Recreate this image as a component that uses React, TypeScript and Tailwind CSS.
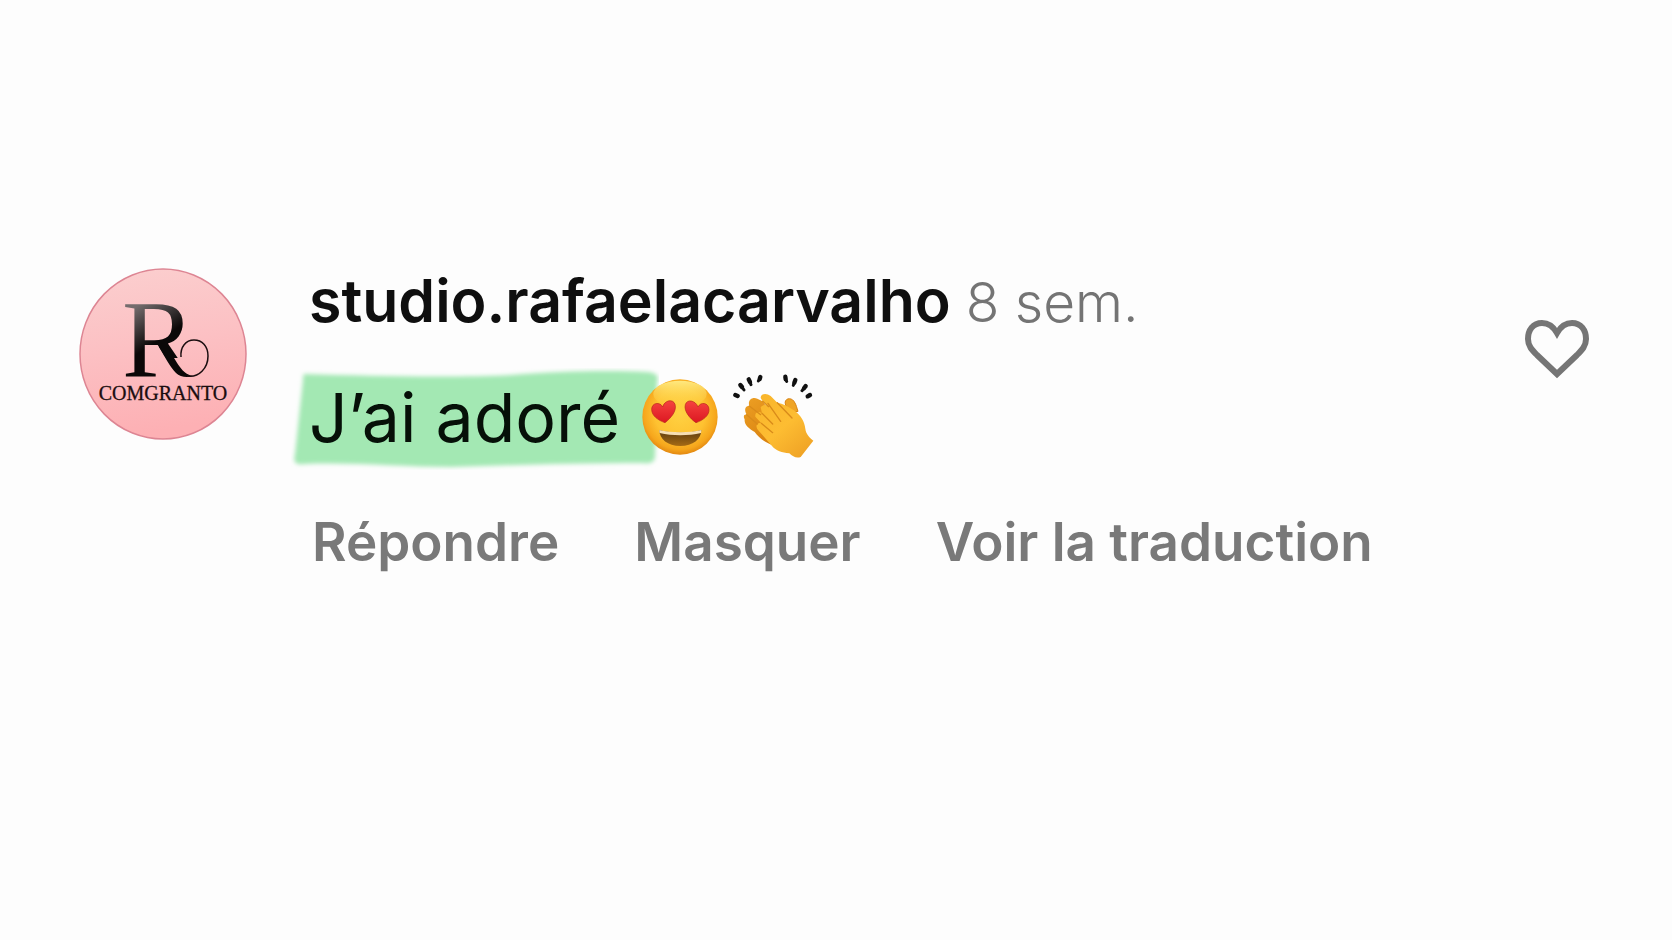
import React from 'react';

type Action = {
  id: string;
  label: string;
};

const actions: Action[] = [
  { id: 'reply', label: 'Répondre' },
  { id: 'hide', label: 'Masquer' },
  { id: 'translate', label: 'Voir la traduction' },
];

function Avatar() {
  return (
    <svg viewBox="0 0 168 172" className="w-[168px] h-[172px] shrink-0" role="img" aria-label="COMGRANTO">
      <defs>
        <linearGradient id="avatar-bg" x1="0" y1="0" x2="0.15" y2="1">
          <stop offset="0" stopColor="#fbcfcf" />
          <stop offset="0.5" stopColor="#fcc0c3" />
          <stop offset="1" stopColor="#fdb0b4" />
        </linearGradient>
        <linearGradient id="avatar-ink" gradientUnits="userSpaceOnUse" x1="58" y1="38" x2="80" y2="72">
          <stop offset="0" stopColor="#746c6d" />
          <stop offset="0.4" stopColor="#4a4445" />
          <stop offset="1" stopColor="#0b0808" />
        </linearGradient>
        <clipPath id="avatar-cut">
          <path d="M30 20H125V90H84V120H30Z" />
        </clipPath>
      </defs>
      <ellipse cx="84" cy="86" rx="83" ry="85" fill="url(#avatar-bg)" stroke="#dd8593" strokeWidth="1.5" />
      <g fontFamily="'Liberation Serif', serif">
        <text x="43" y="109" fontSize="110" fill="url(#avatar-ink)" clipPath="url(#avatar-cut)">R</text>
        <text x="84" y="132" fontSize="20" textAnchor="middle" fill="#1a0d0f" stroke="#1a0d0f" strokeWidth="0.3">COMGRANTO</text>
      </g>
      <path d="M80 79L88 79C96 89 101 106 114 108C108 110 101 109 97 105C91 99 86 89 80 79Z" fill="#0b0808" />
      <path
        d="M108 108C120 110 129 100 129 88C129 78 123 72 115 72C107 72 101 79 102 89"
        fill="none"
        stroke="#1a0d0f"
        strokeWidth="1.5"
      />
    </svg>
  );
}

function HeartEyes() {
  return (
    <svg viewBox="19 13 228 228" className="w-[76px] h-[76px] shrink-0" role="img" aria-label="😍">
      <defs>
        <radialGradient id="face" cx="0.5" cy="0.45" r="0.56">
          <stop offset="0" stopColor="#ffd243" />
          <stop offset="0.6" stopColor="#fec231" />
          <stop offset="0.86" stopColor="#f6a61c" />
          <stop offset="1" stopColor="#e08410" />
        </radialGradient>
        <linearGradient id="shine" x1="0" y1="0" x2="0" y2="1">
          <stop offset="0" stopColor="#fff08c" stopOpacity="0.9" />
          <stop offset="1" stopColor="#ffdc50" stopOpacity="0" />
        </linearGradient>
        <linearGradient id="eye" x1="0" y1="0" x2="0" y2="1">
          <stop offset="0" stopColor="#f5423f" />
          <stop offset="1" stopColor="#dc1822" />
        </linearGradient>
        <linearGradient id="mouth" x1="0" y1="0" x2="0" y2="1">
          <stop offset="0" stopColor="#5b3a10" />
          <stop offset="1" stopColor="#a56a14" />
        </linearGradient>
      </defs>
      <circle cx="133" cy="127" r="113" fill="url(#face)" />
      <ellipse cx="133" cy="58" rx="80" ry="40" fill="url(#shine)" />
      <g fill="url(#eye)" stroke="#b5241b" strokeWidth="2">
        <path d="M88 144C68 137 48 124 48 104C48 84 73 80 81 97C86 77 112 71 118 89C124 109 106 130 88 144Z" />
        <path d="M181 144C162 131 144 109 149 90C154 72 180 77 187 97C195 80 219 84 220 104C221 124 201 137 181 144Z" />
      </g>
      <path d="M71 166C108 177 160 177 197 166C197 193 172 214 134 214C96 214 71 193 71 166Z" fill="url(#mouth)" />
      <path d="M71 166C108 175 160 175 197 166C197 170 197 172 196 175C158 184 110 184 72 175C71 172 71 170 71 166Z" fill="#f6deb4" />
    </svg>
  );
}

function Clap() {
  return (
    <svg viewBox="15 10 246 258" className="w-[82px] h-[86px] shrink-0" role="img" aria-label="👏">
      <defs>
        <linearGradient id="palm" x1="0.1" y1="0" x2="0.9" y2="1">
          <stop offset="0" stopColor="#f9b52b" />
          <stop offset="0.5" stopColor="#fdbd32" />
          <stop offset="1" stopColor="#eea024" />
        </linearGradient>
        <linearGradient id="back-hand" x1="0" y1="0" x2="0.6" y2="1">
          <stop offset="0" stopColor="#eda024" />
          <stop offset="1" stopColor="#d98210" />
        </linearGradient>
      </defs>
      <g fill="none" stroke="#111" strokeLinecap="round">
        <g strokeWidth="13">
          <path d="M22 73L29 76" />
          <path d="M37 43L42 49" />
          <path d="M62 26L66 34" />
          <path d="M97 19L95 25" />
          <path d="M172 18L173 26" />
          <path d="M202 28L199 36" />
          <path d="M233 46L228 53" />
          <path d="M246 73L239 77" />
        </g>
        <path d="M42 49L48 58M66 34L69 42M95 25L91 31M173 26L176 32M199 36L196 44M228 53L222 60" strokeWidth="9" />
      </g>
      <path
        d="M64 106C58 88 73 77 88 84L104 92L150 160L130 222C108 214 92 200 80 184C62 174 48 162 50 146C44 136 50 130 56 132C46 114 54 104 64 106Z"
        fill="url(#back-hand)"
      />
      <path d="M172 100C168 84 188 78 198 92C206 104 206 112 210 122L180 126Z" fill="#efa426" stroke="#d98413" strokeWidth="3" />
      <path
        d="M98 82C98 68 116 66 128 76L148 96C164 98 182 108 200 120C218 134 230 152 232 174C234 190 244 200 256 210L218 259C206 264 194 258 184 248C162 246 144 240 132 226L90 178C80 166 88 154 100 158L82 138C80 124 92 120 102 128L98 110C104 102 112 102 120 106L104 92Z"
        fill="url(#palm)"
      />
      <path
        d="M104 92L122 108M102 128L134 160M100 158L134 186M120 98L158 152M148 96L192 142M64 106L98 132M56 132L88 160"
        fill="none"
        stroke="#d98b1a"
        strokeWidth="4"
        strokeLinecap="round"
      />
    </svg>
  );
}

// Uneven marker stroke laid behind the comment text
function Marker() {
  return (
    <svg viewBox="0 0 368 102" className="absolute -left-[18px] -top-[3px] w-[368px] h-[102px]" aria-hidden="true">
      <filter id="soft" x="-5%" y="-10%" width="110%" height="120%">
        <feGaussianBlur stdDeviation="2" />
      </filter>
      <path
        d="M14 6C80 8 160 10 220 7C270 3 320 2 356 4C366 5 368 8 366 14L364 88C364 94 360 96 352 95C290 95 220 97 160 99C110 99 60 94 14 96C4 97 2 94 4 86L12 12C12 8 12 6 14 6Z"
        fill="#a3e8b3"
        filter="url(#soft)"
      />
    </svg>
  );
}

export default function App() {
  return (
    <main className="min-h-screen bg-[#fdfdfd] pl-[79px] pr-[82px] pt-[268px] font-['Inter',sans-serif]">
      <article className="flex items-start gap-[62px]">
        <Avatar />
        <div className="flex-1 min-w-0">
          <header className="flex items-baseline gap-[15px] text-[59px] leading-[66px]">
            <a href="#profile" className="font-semibold text-[#0f0f0f]">studio.rafaelacarvalho</a>
            <time className="text-[55px] font-light text-[#747474]">8 sem.</time>
          </header>
          <div className="mt-[36px] flex items-center">
            <div className="relative">
              <Marker />
              <p className="relative text-[68px] leading-[92px] text-[#061008]">J’ai adoré</p>
            </div>
            <div className="relative ml-[22px] flex items-center gap-[15px]">
              <HeartEyes />
              <Clap />
            </div>
          </div>
          <div className="mt-[47px] ml-[3px] flex gap-[75px] text-[53px] leading-[64px] font-semibold text-[#797979]">
            {actions.map((action) => (
              <button key={action.id} type="button" className="whitespace-nowrap">
                {action.label}
              </button>
            ))}
          </div>
        </div>
        <button type="button" aria-label="J’aime" className="mt-[51px] shrink-0">
          <svg viewBox="0 0 66 60" className="w-[66px] h-[60px]" fill="none" stroke="#757575" strokeWidth="6">
            <path d="M33 14C29 7 24 4 18 4C9 4 4 11 4 20C4 27 8 31 13 36L33 55L53 36C58 31 62 27 62 20C62 11 57 4 48 4C42 4 37 7 33 14Z" />
          </svg>
        </button>
      </article>
    </main>
  );
}
